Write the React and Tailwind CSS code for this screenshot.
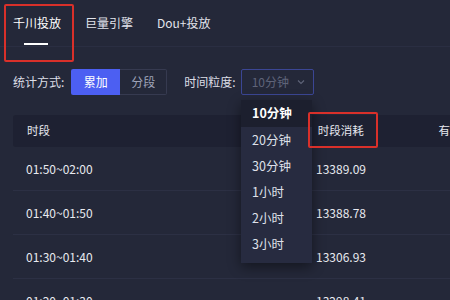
import React from 'react';

const font = { fontFamily: '"Noto Sans CJK SC", "Noto Sans", sans-serif' };

const rows = [
  { time: '01:50~02:00', cost: '13389.09' },
  { time: '01:40~01:50', cost: '13388.78' },
  { time: '01:30~01:40', cost: '13306.93' },
  { time: '01:20~01:30', cost: '13298.41' },
];

const options = ['10分钟', '20分钟', '30分钟', '1小时', '2小时', '3小时'];

const App = () => {
  return (
    <div className="relative w-[450px] h-[300px] overflow-hidden bg-[#242839] text-[#e6e8ef]" style={font}>
      {/* tabs */}
      <div className="flex items-center h-[47px] border-b border-[#2a2e42] pl-[13px] text-[12px]">
        <div className="relative h-full flex items-center">
          <span className="text-white">千川投放</span>
          <div className="absolute left-[11px] bottom-[1px] w-[24px] h-[2px] bg-white" />
        </div>
        <span className="ml-[24px] text-[#e2e4ec]">巨量引擎</span>
        <span className="ml-[24px] text-[#e2e4ec]">Dou+投放</span>
      </div>

      {/* filters */}
      <div className="flex items-center h-[26px] mt-[22px] pl-[13px] text-[12px]">
        <span className="text-[#dcdee6]">统计方式:</span>
        <div className="flex ml-[7px] h-[26px]">
          <div className="w-[49px] flex items-center justify-center bg-[#4c5ff2] text-white rounded-l-[2px]">累加</div>
          <div className="w-[47px] flex items-center justify-center border border-l-0 border-[#363a50] text-[#9fa3b8] rounded-r-[2px]">分段</div>
        </div>
        <span className="ml-[17px] text-[#dcdee6]">时间粒度:</span>
        <div className="relative ml-[5px] w-[73px] h-[26px] border border-[#3b4694] rounded-[2px] flex items-center pl-[10px] text-[#5f6479]">
          <span>10分钟</span>
          <svg className="ml-[7px]" width="10" height="10" viewBox="0 0 10 10" fill="none">
            <path d="M2 3.5 L5 6.5 L8 3.5" stroke="#5f6479" strokeWidth="1.1" />
          </svg>
        </div>
      </div>

      {/* table */}
      <div className="mt-[20px] ml-[13px]">
        <div className="flex items-center h-[32px] bg-[#1e2132] rounded-l-[3px] text-[11.5px] text-[#e6e8ef]">
          <span className="w-[295px] pl-[14px]">时段</span>
          <span className="w-[135px] pl-[13px]">时段消耗</span>
          <span>有</span>
        </div>
        {rows.map((r) => (
          <div key={r.time} className="flex items-center h-[44px] border-b border-[#2c3044] text-[12px] text-[#e8eaf0]">
            <span className="w-[295px] pl-[13px]">{r.time}</span>
            <span className="pl-[8px]">{r.cost}</span>
          </div>
        ))}
      </div>

      {/* dropdown */}
      <div className="absolute left-[241px] top-[100px] w-[71px] bg-[#272b40] shadow-[0_4px_12px_rgba(0,0,0,0.45)] text-[12.5px]">
        {options.map((o, i) => (
          <div
            key={o}
            className={
              i === 0
                ? 'h-[27px] flex items-center pl-[11px] bg-[#1c1f2e] font-bold text-white'
                : 'h-[26px] flex items-center pl-[11px] text-[#dfe1ea]'
            }
          >
            {o}
          </div>
        ))}
        <div className="h-[6px]" />
      </div>

      {/* annotation boxes */}
      <div className="absolute left-[4px] top-[4px] w-[70px] h-[58px] border-2 border-[#d9302a] rounded-[2px]" />
      <div className="absolute left-[308px] top-[112px] w-[70px] h-[36px] border-2 border-[#d9302a] rounded-[2px]" />
    </div>
  );
};

export default App;
